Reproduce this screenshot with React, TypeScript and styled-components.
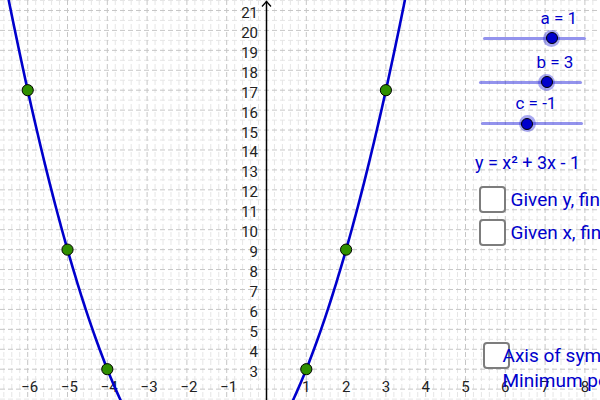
import styled, { createGlobalStyle } from "styled-components"

// graph coordinate system (pixels per unit, origin on screen)
const W = 600
const H = 400
const OX = 266.5
const SX = 39.8
const OY = 429
const SY = 19.93

const px = (x: number) => OX + x * SX
const py = (y: number) => OY - y * SY
const f = (x: number) => x * x + 3 * x - 1

const BLUE = "#0000cc"

const GlobalStyle = createGlobalStyle`
    html, body {
        margin: 0;
        padding: 0;
        background: #fff;
        overflow: hidden;
    }
    body {
        font-family: Roboto, "Noto Sans", sans-serif;
    }
`

const Canvas = styled.div`
    position: relative;
    width: ${W}px;
    height: ${H}px;
    overflow: hidden;
    background: #fff;
`

const GraphSvg = styled.svg`
    display: block;
`

const AxisLabel = styled.text`
    font-family: Roboto, sans-serif;
    font-size: 15px;
    fill: #222;
`

// objects on the geogebra canvas sit at their own coordinates
const CanvasObject = styled.div<{ $x: number; $y: number }>`
    position: absolute;
    left: ${p => p.$x}px;
    top: ${p => p.$y}px;
`

const SliderWidget = styled(CanvasObject)<{ $w: number }>`
    width: ${p => p.$w}px;
    display: flex;
    flex-direction: column;
    gap: 3px;
`

const SliderLabel = styled.div<{ $indent: number }>`
    margin-left: ${p => p.$indent}px;
    font-size: 17px;
    line-height: 17px;
    color: ${BLUE};
    white-space: nowrap;
`

const TrackWrap = styled.div`
    position: relative;
    height: 17px;
    display: flex;
    align-items: center;
`

const Track = styled.div`
    flex: 1;
    height: 3px;
    border-radius: 1.5px;
    background: rgba(40, 40, 220, 0.5);
`

const Knob = styled.div`
    position: absolute;
    top: 0;
    width: 17px;
    height: 17px;
    margin-left: -8.5px;
    border-radius: 50%;
    background: rgba(40, 40, 220, 0.4);
    display: flex;
    align-items: center;
    justify-content: center;

    &::after {
        content: "";
        width: 10px;
        height: 10px;
        border-radius: 50%;
        background: ${BLUE};
        border: 1px solid #000;
    }
`

const Equation = styled(CanvasObject)`
    font-size: 18px;
    line-height: 18px;
    color: ${BLUE};
    white-space: nowrap;
`

const CheckGroup = styled(CanvasObject)`
    display: flex;
    flex-direction: column;
    gap: 2px;
`

const CheckRow = styled.div`
    display: flex;
    align-items: center;
`

const CheckBox = styled.div`
    flex: none;
    width: 27px;
    height: 27px;
    box-sizing: border-box;
    border: 2px solid #7d7d7d;
    border-radius: 4px;
    background: #fff;
`

const CheckText = styled.div<{ $indent: number }>`
    margin-left: ${p => p.$indent}px;
    font-size: 19px;
    line-height: 19px;
    color: ${BLUE};
    white-space: nowrap;
    position: relative;
`

const sliders = [
    { label: "a = 1", indent: 57.5, ly: 18, x: 483, w: 103, knob: 551.5 },
    { label: "b = 3", indent: 57.5, ly: 62, x: 479, w: 103, knob: 546.5 },
    { label: "c = -1", indent: 34.5, ly: 103.5, x: 481, w: 102, knob: 527 },
]

const Grid = () => {
    const minorX = SX / 5
    const minorY = SY / 2
    const verticals = []
    for (let i = Math.ceil(-OX / minorX); i <= Math.floor((W - OX) / minorX); i++) {
        verticals.push({ x: OX + i * minorX, major: i % 5 === 0 })
    }
    const horizontals = []
    for (let j = Math.ceil((OY - H) / minorY); j <= Math.floor(OY / minorY); j++) {
        horizontals.push({ y: OY - j * minorY, major: j % 2 === 0 })
    }
    const all = [
        ...verticals.map(v => ({ key: `v${v.x}`, x1: v.x, y1: 0, x2: v.x, y2: H, major: v.major })),
        ...horizontals.map(h => ({ key: `h${h.y}`, x1: 0, y1: h.y, x2: W, y2: h.y, major: h.major })),
    ]
    return (
        <g>
            {all.filter(l => !l.major).map(l => (
                <line key={l.key} x1={l.x1} y1={l.y1} x2={l.x2} y2={l.y2}
                    stroke="#e6e6e6" strokeWidth={1} strokeDasharray="5 3" />
            ))}
            {all.filter(l => l.major).map(l => (
                <line key={l.key} x1={l.x1} y1={l.y1} x2={l.x2} y2={l.y2}
                    stroke="#c6c6c6" strokeWidth={1} strokeDasharray="5 3" />
            ))}
        </g>
    )
}

const Graph = () => {
    const pts: string[] = []
    for (let x = -6.7; x <= 3.6; x += 0.05) {
        pts.push(`${px(x).toFixed(2)},${py(f(x)).toFixed(2)}`)
    }
    const xTicks = [-6, -5, -4, -3, -2, -1, 1, 2, 3, 4, 5, 6, 7, 8]
    const yTicks = Array.from({ length: 19 }, (_, i) => i + 3)
    const dots = [-6, -5, -4, 1, 2, 3]

    return (
        <GraphSvg width={W} height={H} viewBox={`0 0 ${W} ${H}`}>
            <Grid />

            {/* y axis */}
            <line x1={OX} y1={1} x2={OX} y2={H} stroke="#000" strokeWidth={1.5} />
            <polyline points={`${OX - 4.5},6.5 ${OX},1.5 ${OX + 4.5},6.5`}
                fill="none" stroke="#000" strokeWidth={1.3} />

            {yTicks.map(v => (
                <AxisLabel key={v} x={258} y={py(v) + 7.5} textAnchor="end">{v}</AxisLabel>
            ))}
            {xTicks.map(v => (
                <AxisLabel key={v} x={px(v) + (v < 0 ? 2 : 0)} y={391.5} textAnchor="middle">
                    {v < 0 ? `\u2212${-v}` : v}
                </AxisLabel>
            ))}

            <polyline points={pts.join(" ")} fill="none" stroke={BLUE} strokeWidth={2.6}
                strokeLinejoin="round" />

            {dots.map(x => (
                <circle key={x} cx={px(x)} cy={py(f(x))} r={5.6}
                    fill="#2f8f00" stroke="#000" strokeWidth={1} />
            ))}
        </GraphSvg>
    )
}

const App = () => {
    return (
        <Canvas>
            <GlobalStyle />
            <Graph />

            {sliders.map(s => (
                <SliderWidget key={s.label} $x={s.x} $y={s.ly - 8.5} $w={s.w}>
                    <SliderLabel $indent={s.indent}>{s.label}</SliderLabel>
                    <TrackWrap>
                        <Track />
                        <Knob style={{ left: s.knob - s.x }} />
                    </TrackWrap>
                </SliderWidget>
            ))}

            <Equation $x={475} $y={154}>y = x² + 3x - 1</Equation>

            <CheckGroup $x={479} $y={186}>
                <CheckRow>
                    <CheckBox />
                    <CheckText $indent={4.5}>Given y, find x</CheckText>
                </CheckRow>
            </CheckGroup>
            <CheckGroup $x={479} $y={219}>
                <CheckRow>
                    <CheckBox />
                    <CheckText $indent={4.5}>Given x, find y</CheckText>
                </CheckRow>
            </CheckGroup>
            <CheckGroup $x={483} $y={342}>
                <CheckRow>
                    <CheckBox />
                    <CheckText $indent={-7.5}>Axis of symmetry</CheckText>
                </CheckRow>
                <CheckText $indent={19.5}>Minimum point</CheckText>
            </CheckGroup>
        </Canvas>
    )
}

export default App
